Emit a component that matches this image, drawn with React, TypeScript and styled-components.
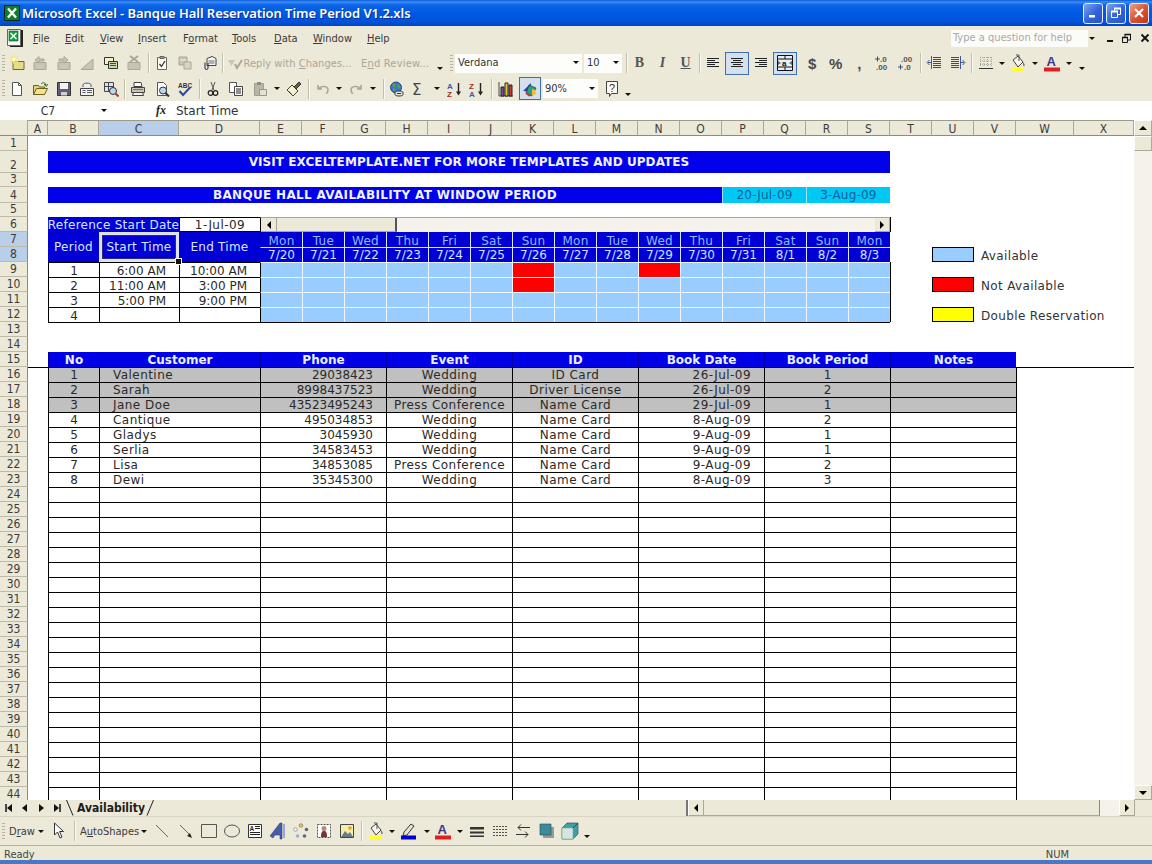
import React from "react";
import styled, { createGlobalStyle, css } from "styled-components";

const UI = `"DejaVu Sans Condensed","Noto Sans",sans-serif`;
const SHEET = `"DejaVu Sans","Noto Sans",sans-serif`;
const BAR = "#ece9d8";

const Global = createGlobalStyle`
  html, body { margin: 0; padding: 0; width: 1152px; height: 864px; overflow: hidden; background: ${BAR}; }
  * { box-sizing: border-box; }
  svg { display: block; flex: none; }
`;

const Win = styled.div`display:flex;flex-direction:column;width:1152px;height:864px;background:${BAR};font-family:${UI};color:#222;`;

/* ---- title bar ---- */
const TitleBar = styled.div`
  height:26px;flex:none;display:flex;align-items:center;padding:0 3px 0 4px;color:#fff;
  background:linear-gradient(#0a5ad8 0,#3d8df5 2px,#0a63e6 5px,#0058e0 14px,#0052dc 22px,#0043c0 26px);
`;
const TitleText = styled.span`margin-left:2px;font:600 13px/26px "Noto Sans",sans-serif;letter-spacing:-.06px;text-shadow:1px 1px 0 #0a2f8a;flex:1;white-space:nowrap;`;
const WinBtn = styled.div<{ $close?: boolean }>`
  width:20px;height:21px;margin-left:3px;border:1px solid #e8effa;border-radius:3px;display:flex;align-items:center;justify-content:center;
  background:${p => p.$close ? "linear-gradient(135deg,#f0a080,#d8502c 55%,#c03818)" : "linear-gradient(135deg,#7ea4ee,#2f62d8 55%,#2a55c8)"};
`;

/* ---- toolbars ---- */
const MenuRow = styled.div`height:24px;flex:none;display:flex;align-items:center;`;
const MenuItem = styled.span<{ $w: number }>`flex:none;width:${p => p.$w}px;font-size:11px;color:#3a3a3a;white-space:nowrap;`;
const HelpBox = styled.div`width:137px;height:17px;background:#fbfbf8;color:#a9a9a9;font-size:11px;line-height:16px;padding-left:2px;white-space:nowrap;`;
const Tool = styled.div<{ $h: number; $pad?: number }>`height:${p => p.$h}px;flex:none;display:flex;align-items:center;padding-left:${p => p.$pad ?? 2}px;`;
const Grip = styled.i`flex:none;width:3px;height:17px;background:repeating-linear-gradient(#b5b29f 0 1px,transparent 1px 3px);`;
const Slot = styled.div<{ $w: number; $on?: boolean }>`
  flex:none;width:${p => p.$w}px;height:23px;display:flex;align-items:center;justify-content:center;
  ${p => p.$on && css`background:#d5e0ee;outline:1px solid #3f6ea8;outline-offset:-1px;`}
`;
const Sep = styled.div<{ $w: number }>`
  flex:none;width:${p => p.$w}px;height:20px;display:flex;justify-content:center;
  &::before{content:"";width:1px;height:100%;background:#c2bfac;box-shadow:1px 0 0 #fafaf4;}
`;
const Gap = styled.div<{ $w: number }>`flex:none;width:${p => p.$w}px;`;
const Caret = styled.i`display:block;width:0;height:0;border-left:3px solid transparent;border-right:3px solid transparent;border-top:3px solid #111;`;
const Chevron = styled(Caret)`margin-top:11px;`;
const DimLabel = styled.div<{ $w: number; $pad: number }>`flex:none;width:${p => p.$w}px;padding:1px 0 0 ${p => p.$pad}px;font-size:11px;color:#aaa797;white-space:nowrap;overflow:hidden;display:flex;align-items:center;`;
const ReplyText = styled.span`margin-left:1px;letter-spacing:.05px;white-space:pre;`;
const EndText = styled.span`letter-spacing:.2px;white-space:pre;`;
const Label = styled(DimLabel)`color:#3a3a3a;`;
const Combo = styled.div<{ $w: number; $pad?: number }>`
  flex:none;width:${p => p.$w}px;height:19px;background:#fdfdfb;display:flex;align-items:center;justify-content:space-between;
  padding:0 3px 1px ${p => p.$pad ?? 3}px;font-size:11px;color:#333;
`;
const GlyphB = styled.span<{ $i?: boolean; $u?: boolean }>`
  font:${p => p.$i ? "italic " : ""}700 14px "Liberation Serif",serif;color:#555;
  ${p => p.$u && "text-decoration:underline;"}
`;
const GlyphN = styled.span`font:700 15px "Liberation Sans",sans-serif;color:#4a4a4a;`;

/* ---- formula bar ---- */
const Formula = styled.div`height:19px;flex:none;display:flex;align-items:center;background:#fff;font-family:${SHEET};`;
const NameBox = styled.div`flex:none;width:96px;text-align:center;font:12px ${UI};color:#333;`;
const FxArea = styled.div`flex:none;width:80px;height:100%;display:flex;align-items:center;padding-left:5px;background:#fff;`;
const Fx = styled.span`margin-left:49px;font:italic 700 12px "Liberation Serif",serif;color:#222;`;
const FormulaText = styled.span`font-size:12px;color:#333;`;

/* ---- sheet ---- */
const SheetArea = styled.div`height:680px;flex:none;display:flex;background:#fff;position:relative;overflow:hidden;`;
const Grid = styled.div`
  flex:none;width:1134px;height:680px;overflow:hidden;display:grid;position:relative;font:12px/1 ${SHEET};color:#2a2a2a;
  grid-template-columns:28px 20px 51px 80px 81px repeat(18,42px) 58px 60px;
  grid-template-rows:16px 15px 22px 14px 16px 14px repeat(39,15px);
`;
type At = { $c: number; $r: number; $cs?: number; $rs?: number };
const place = css<At>`
  grid-column:${p => p.$c} / span ${p => p.$cs ?? 1};
  grid-row:${p => p.$r + 1} / span ${p => p.$rs ?? 1};
  display:flex;align-items:center;white-space:nowrap;
`;
const Corner = styled.div`grid-column:1;grid-row:1;background:${BAR};border-right:1px solid #aca899;border-bottom:1px solid #8d8b7c;`;
const ColHead = styled.div<{ $c: number; $on: boolean }>`
  grid-column:${p => p.$c};grid-row:1;display:flex;align-items:center;justify-content:center;padding-top:1px;
  background:${p => p.$on ? "#b9cee8" : BAR};border-right:1px solid #aca899;border-bottom:1px solid #8d8b7c;border-top:1px solid #9c9a8a;
  font:12px ${UI};color:#3c3c3c;
`;
const RowHead = styled.div<{ $r: number; $on: boolean }>`
  grid-column:1;grid-row:${p => p.$r + 1};display:flex;align-items:flex-end;justify-content:center;
  background:${p => p.$on ? "#b9cee8" : BAR};border-right:1px solid #8d8b7c;border-bottom:1px solid #bdbaa8;
  font:12px/14px ${UI};color:#3c3c3c;
`;
const Banner = styled.div<At & { $sp: number }>`${place};justify-content:center;background:#0000ea;color:#f2f2ff;font-weight:700;font-size:12px;letter-spacing:${p => p.$sp}px;`;
const DateChip = styled.div<At>`${place};justify-content:center;background:#00c8f4;color:#10609a;border-left:1px solid #9fe6f8;letter-spacing:.2px;`;
const PeriodHead = styled.div<At>`${place};justify-content:center;background:#0000d4;color:#d8e6ff;letter-spacing:.25px;`;
const RefLabel = styled(PeriodHead)`padding-top:1px;letter-spacing:.27px;`;
const RefDate = styled.div<At>`${place};justify-content:center;background:#fff;border:1px solid #000;border-right:0;padding-top:1px;letter-spacing:.45px;`;
const Selected = styled(PeriodHead)`position:relative;border:3px solid #dfe2e8;box-shadow:inset 0 0 0 1px #2a2a80;`;
const Handle = styled.i`position:absolute;right:-6px;bottom:-6px;width:7px;height:7px;background:#111;border:1px solid #fff;`;
const DayHead = styled.div<At & { $date?: boolean; $first?: boolean }>`
  ${place};justify-content:center;background:#0000d4;color:${p => p.$date ? "#cfe2ff" : "#8fb8ff"};
  border-left:1px solid ${p => p.$first ? "#0000d4" : "#dfe6ff"};
  ${p => p.$date ? "border-top:1px solid #dfe6ff;" : "padding-top:2px;letter-spacing:.3px;"}
`;
const Avail = styled.div<At & { $red?: boolean; $last?: boolean; $bottom?: boolean; $first?: boolean }>`
  ${place};background:${p => p.$red ? "#ff0000" : "#99ccff"};
  border-left:1px solid ${p => p.$first ? "#000" : "#eef6ff"};
  border-top:1px solid #eef6ff;
  box-shadow:${p => p.$last ? "1px 0 0 #000" : "0 0 0 transparent"}${p => p.$bottom ? ",0 1px 0 #000" : ""};
`;
const DataCell = styled.div<At & { $align?: string; $grey?: boolean; $last?: boolean; $bottom?: boolean; $num?: boolean; $low?: boolean }>`
  ${place};justify-content:${p => p.$align ?? "center"};
  ${p => p.$align === "flex-end" ? "padding-right:13px;" : p.$align === "flex-start" ? "padding-left:13px;" : ""}
  ${p => p.$low && "padding-top:2px;"}
  letter-spacing:${p => p.$num ? 0 : .45}px;
  background:${p => p.$grey ? "#c0c0c0" : "#fff"};border-top:1px solid #000;border-left:1px solid #000;
  ${p => p.$last && "box-shadow:1px 0 0 #000;"}
  ${p => p.$bottom && "box-shadow:0 1px 0 #000;"}
`;
const TableHead = styled.div<At>`${place};justify-content:center;background:#0000e6;color:#e8f0ff;font-weight:700;font-size:12px;border-left:1px solid #0000aa;`;
const Swatch = styled.div<At & { $bg: string }>`${place};background:${p => p.$bg};border:1px solid #000;`;
const LegendText = styled.div<At>`${place};padding:2px 0 0 7px;color:#333;letter-spacing:.35px;`;
const FreezeLine = styled.div`position:absolute;left:28px;right:-18px;top:247px;height:1px;background:#000;`;

const HScroll = styled.div<At>`${place};align-items:stretch;background:#f4f2ea;border-top:1px solid #a8a698;border-left:1px solid #000;box-shadow:1px 0 0 #000;`;
const ScrollBtn = styled.div<{ $w?: number }>`
  flex:none;width:${p => p.$w ?? 16}px;display:flex;align-items:center;justify-content:center;background:${BAR};
  border-right:1px solid #a8a698;border-bottom:1px solid #a8a698;
`;
const ScrollThumb = styled.div<{ $w: number }>`
  flex:none;width:${p => p.$w}px;background:${BAR};border-right:2px solid #555;border-bottom:1px solid #a8a698;
`;
const ScrollFill = styled.div`flex:1;`;
const VScroll = styled.div`flex:none;width:18px;height:680px;display:flex;flex-direction:column;background:#f4f2ea;`;
const VBtn = styled.div<{ $h: number }>`flex:none;height:${p => p.$h}px;display:flex;align-items:center;justify-content:center;background:${BAR};border:1px solid #aca899;border-top-color:#fff;border-left-color:#fff;`;
const VFill = styled.div`flex:1;`;
const Up = styled.i`width:0;height:0;border-left:4px solid transparent;border-right:4px solid transparent;border-bottom:4px solid #000;`;
const Down = styled.i`width:0;height:0;border-left:4px solid transparent;border-right:4px solid transparent;border-top:4px solid #000;`;
const Lft = styled.i`width:0;height:0;border-top:4px solid transparent;border-bottom:4px solid transparent;border-right:4px solid #000;`;
const Rgt = styled.i`width:0;height:0;border-top:4px solid transparent;border-bottom:4px solid transparent;border-left:4px solid #000;`;

/* ---- tab bar ---- */
const TabBar = styled.div`height:17px;flex:none;display:flex;align-items:stretch;background:${BAR};border-bottom:1px solid #d8d5c4;`;
const TabNav = styled.div`flex:none;width:66px;display:flex;align-items:center;padding-left:4px;gap:7px;`;
const NavBtn = styled.div`flex:none;width:9px;display:flex;align-items:center;justify-content:center;`;
const Tab = styled.div`flex:none;width:620px;display:flex;align-items:flex-start;`;
const TabName = styled.span`font:700 12px/17px ${UI};color:#1c1c1c;margin:0 1px 0 3px;`;
const Split = styled.div`flex:none;width:2px;background:#777;`;
const TabBtn = styled.div<{ $w: number }>`flex:none;width:${p => p.$w}px;display:flex;align-items:center;justify-content:center;background:${BAR};border:1px solid #aca899;border-top:0;border-left-color:#fff;`;
const TabThumb = styled.div`flex:none;width:396px;background:${BAR};border-right:1px solid #8d8b7c;border-bottom:1px solid #aca899;`;
const TabTrack = styled.div`flex:none;width:19px;background:#f4f2ea;`;
const TabCorner = styled.div`flex:1;background:${BAR};`;

/* ---- status ---- */
const Status = styled.div`height:15px;flex:none;display:flex;align-items:center;justify-content:space-between;padding:3px 83px 0 4px;font-size:11px;color:#444;border-top:1px solid #b4b19f;`;
const Strip = styled.div`height:4px;flex:none;background:#4a78c4;`;

/* ---- icons ---- */
const S = ({ children, w = 16, h = 16 }: { children: React.ReactNode; w?: number; h?: number }) => (
  <svg width={w} height={h} viewBox={`0 0 ${w} ${h}`}>{children}</svg>
);
const grey = "#c8c5b3", gs = "#aaa796";
const NoteG = () => <path d="M2 7.5h12v7H2z" fill={grey} stroke={gs} />;
const Lines = ({ d }: { d: string }) => <path d={d} stroke="#222" fill="none" />;
const doc = "M3.5 1.5h6l3 3v10h-9z";
const icons: Record<string, React.ReactNode> = {
  cnew: <S><path d="M4 6.5h11v8H4z" fill="#e6dc86" stroke="#6f6a34" /><path d="M5 0l1 3 3-1-2 2.5 2 2.5-3-1-1 3-1-3-3 1 2-2.5-2-2.5 3 1z" fill="#fffba8" stroke="#e8e060" strokeWidth=".6" /></S>,
  cprev: <S><NoteG /><path d="M3 4h5V1.5l4 3.5-4 3V6H3z" fill={grey} stroke={gs} transform="matrix(-1 0 0 1 15 0)" /></S>,
  cnext: <S><NoteG /><path d="M3 4h5V1.5l4 3.5-4 3V6H3z" fill={grey} stroke={gs} /></S>,
  cshow: <S><path d="M2 14.5L14 4v10.500z" fill={grey} stroke={gs} /></S>,
  call: <S><path d="M1.5 2.5h9v7h-9z" fill="#f4f2c8" stroke="#333" /><path d="M5.5 6.5h9v7h-9z" fill="#c9d8a8" stroke="#333" /><path d="M7 8.5h6M7 10.5h6" stroke="#445" /></S>,
  cdel: <S><NoteG /><path d="M4 1l8 6M12 1L4 7" stroke={gs} strokeWidth="2" /></S>,
  task: <S><path d="M3.5 2.5h9v12h-9z" fill="#fbfaf2" stroke="#666" /><path d="M6 1.5h4v2H6z" fill="#999" stroke="#666" /><path d="M5.5 9l2 2.5L11 6" stroke="#333" fill="none" strokeWidth="1.3" /></S>,
  track: <S><path d="M2 2h8v8H2z" fill={grey} stroke={gs} /><path d="M7 7h7v7H7z" fill="#d8d5c4" stroke={gs} /><path d="M3 5h6" stroke="#eee" /></S>,
  mail: <S><path d="M6 3.5l5-2 4 2v7H6z" fill="#fafaf2" stroke="#444" /><path d="M7.5 6h6M7.5 8h6" stroke="#667" /><path d="M4 7.5v5.5a1.5 1.5 0 0 0 3 0V8" fill="none" stroke="#224" /></S>,
  reply: <S><path d="M1 4h7l-3.500 6z" fill={grey} /><path d="M8 8l2 4 5-8" stroke={gs} strokeWidth="2" fill="none" /></S>,
  new: <S><path d={doc} fill="#fff" stroke="#555" /><path d="M9.5 1.5v3h3" fill="none" stroke="#555" /></S>,
  open: <S><path d="M1.5 4.5h5l1 1.5h5v7.5h-11z" fill="#e6d27c" stroke="#6f5f1c" /><path d="M1.5 13.5l3-6h11l-3 6z" fill="#f4e48c" stroke="#6f5f1c" /><path d="M9 3c2-2 4-1.5 5 .5l-2 0 2.5 2 1-2.5" fill="none" stroke="#3c6a3c" /></S>,
  save: <S><path d="M1.5 1.5h13v13h-13z" fill="#5f5f7a" stroke="#333" /><path d="M4 2h8v6H4z" fill="#f4f4f4" /><path d="M5 11h6v3.500H5z" fill="#cfcfcf" /></S>,
  perm: <S><path d="M4 6V4c0-2.500 8-2.500 8 0v2" fill="#eee" stroke="#555" /><path d="M1.5 7.5h13v7h-13z" fill="#f4f2e2" stroke="#444" /><path d="M3.5 9.5h3M3.5 11.5h3M8 9.5h5M8 11.5h5" stroke="#55617a" /></S>,
  search: <S><path d="M1.5 1.5h9v9h-9z" fill="#dfe4ea" stroke="#444" /><path d="M1.5 5.5h9M5.5 1.5v9" stroke="#445" /><circle cx="10" cy="10" r="3.5" fill="#bcd8f0" stroke="#333" /><path d="M12.5 12.5l3 3" stroke="#c03020" strokeWidth="2" /></S>,
  print: <S><path d="M4 1.5h7l1 4H4z" fill="#fff" stroke="#444" /><path d="M1.5 6.5h13v5h-13z" fill="#c9c6b8" stroke="#444" /><path d="M3.5 11.5h9l1 3h-11z" fill="#f5f4ee" stroke="#444" /><path d="M3 8.5h10" stroke="#777" /></S>,
  preview: <S><path d={doc} fill="#fff" stroke="#555" /><circle cx="9" cy="9.5" r="3.5" fill="#bcd8f0" stroke="#333" /><path d="M11.5 12l3.500 3.500" stroke="#333" strokeWidth="2" /></S>,
  spell: <S><text x="1" y="7" fontFamily="Liberation Sans" fontSize="6.5" fontWeight="700" fill="#333">ABC</text><path d="M2.5 10l3.500 4 7-7.500" stroke="#2c4a9a" strokeWidth="2" fill="none" /></S>,
  cut: <S><path d="M6 1l3 8M10 1L7 9" stroke="#555" /><circle cx="5.5" cy="12" r="2.3" fill="none" stroke="#222" strokeWidth="1.2" /><circle cx="10.5" cy="12" r="2.3" fill="none" stroke="#222" strokeWidth="1.2" /></S>,
  copy: <S><path d="M1.5 1.5h7v10h-7z" fill="#fff" stroke="#555" /><path d="M6.5 5.5h8v9h-8z" fill="#fff" stroke="#444" /><Lines d="M8 8h5M8 10h5M8 12h5" /></S>,
  paste: <S><path d="M2.5 2.5h9v12h-9z" fill="#b8b6a6" stroke="#a09e8e" /><path d="M5 1h4v3H5z" fill="#8f8d80" /><path d="M7.5 8.5h7v6h-7z" fill="#e4e2d4" stroke="#999786" /></S>,
  brush: <S><path d="M1 9l5-5 6 6-5 5z" fill="#f6f2cc" stroke="#444" /><path d="M8 6l5-5 2 2-5 5z" fill="#7f5c28" stroke="#333" /><path d="M3 10l3 3" stroke="#aaa" /></S>,
  undo: <S><path d="M3 4v4h4M3.5 8C6 4 13 5 13 9c0 2-1 3-2 3.500" fill="none" stroke={gs} strokeWidth="1.6" /></S>,
  redo: <S><path d="M13 4v4H9M12.5 8C10 4 3 5 3 9c0 2 1 3 2 3.500" fill="none" stroke={gs} strokeWidth="1.6" /></S>,
  globe: <S><circle cx="7" cy="6.5" r="5.5" fill="#3c78c8" stroke="#224a88" /><path d="M3 3c3-1 4 1 3 3S3 7 4 9l3 1M9 3l3 3-3 1z" fill="#5aa24a" /><path d="M6 11.5c0-2 8-2 8 0v2c0 2-8 2-8 0z" fill="#e8e6d8" stroke="#333" /><path d="M8 12.5h4" stroke="#333" /></S>,
  az: <S><text x="0" y="7.5" fontFamily="Liberation Sans" fontSize="8" fontWeight="700" fill="#3c5ab0">A</text><text x="0" y="15.5" fontFamily="Liberation Sans" fontSize="8" fontWeight="700" fill="#a03020">Z</text><path d="M11.5 2v10" stroke="#222" strokeWidth="1.4" /><path d="M9 10.5h5l-2.500 4z" fill="#222" /></S>,
  za: <S><text x="0" y="7.5" fontFamily="Liberation Sans" fontSize="8" fontWeight="700" fill="#a03020">Z</text><text x="0" y="15.5" fontFamily="Liberation Sans" fontSize="8" fontWeight="700" fill="#3c5ab0">A</text><path d="M11.5 2v10" stroke="#222" strokeWidth="1.4" /><path d="M9 10.5h5l-2.500 4z" fill="#222" /></S>,
  chart: <S><path d="M1 1v14h14" fill="none" stroke="#444" /><path d="M3 6h3v9H3z" fill="#7a4a9c" stroke="#222" /><path d="M7 2h3v13H7z" fill="#e8c83c" stroke="#222" /><path d="M11 4h3v11h-3z" fill="#c83c3c" stroke="#222" /></S>,
  draw: <S><path d="M1 10L9 2v9z" fill="#2a4ab0" /><path d="M7 4l7 3-4 8-6-3z" fill="#2aa080" stroke="#123" strokeWidth=".6" /><path d="M10 8l3 1 1 4-4 2z" fill="#f0c030" /><path d="M4 12l4 3" stroke="#d03030" strokeWidth="2" /></S>,
  help: <S w={16} h={18}><path d="M2.5 1.5h11v12h-6l-2 3v-3h-3z" fill="#fbfbf4" stroke="#444" /><text x="5" y="11.5" fontFamily="Liberation Sans" fontSize="11" fill="#333">?</text></S>,
  aleft: <S><Lines d="M2 3.5h12M2 5.5h8M2 7.5h12M2 9.5h8M2 11.5h12" /></S>,
  acenter: <S><Lines d="M2 3.5h12M4 5.5h8M2 7.5h12M4 9.5h8M2 11.5h12" /></S>,
  aright: <S><Lines d="M2 3.5h12M6 5.5h8M2 7.5h12M6 9.5h8M2 11.5h12" /></S>,
  merge: <S w={18} h={18}><path d="M1.5 1.5h15v15h-15z" fill="#e8eef6" stroke="#111" /><path d="M1.5 5h15M1.5 13h15M9 1.5V5M9 13v3.500" stroke="#111" /><path d="M2 7v4M2.5 9h2M16 7v4M15.5 9h-2" stroke="#111" /><text x="6" y="12" fontFamily="Liberation Sans" fontSize="8" fontWeight="700" fill="#111">a</text></S>,
  incd: <S w={20}><text x="7" y="7" fontFamily="Liberation Sans" fontSize="8" fontWeight="700" fill="#555">.0</text><text x="3" y="15" fontFamily="Liberation Sans" fontSize="8" fontWeight="700" fill="#555">.00</text><path d="M2 4h5M4.5 1.500v5" stroke="#35507a" /></S>,
  decd: <S w={20}><text x="5" y="7" fontFamily="Liberation Sans" fontSize="8" fontWeight="700" fill="#555">.00</text><text x="8" y="15" fontFamily="Liberation Sans" fontSize="8" fontWeight="700" fill="#555">.0</text><path d="M2 12h5M4.500 9.500v5" stroke="#35507a" /></S>,
  outd: <S><path d="M7 2.5h8M7 4.5h8M7 6.5h8M7 8.5h8M7 10.5h8M7 12.5h8" stroke="#4a4a4a" /><path d="M5 7.5H2M3.5 5l-2.500 2.500L3.500 10M5.500 1v13" stroke="#3c5a9a" fill="none" /></S>,
  ind: <S><path d="M1 2.5h8M1 4.5h8M1 6.5h8M1 8.5h8M1 10.5h8M1 12.5h8" stroke="#4a4a4a" /><path d="M11 7.5h3M12.5 5l2.500 2.500L12.500 10M10.500 1v13" stroke="#3c5a9a" fill="none" /></S>,
  border: <S><path d="M2 2.5h12M2 6h12M2 9.5h12M2.5 2v10M6 2v10M9.5 2v10M13.5 2v10" stroke="#a5a5a0" strokeDasharray="1 1" /><path d="M1 13.5h14" stroke="#333" /></S>,
  fill: <S w={18} h={18}><path d="M4 6l5-4 5 6-5 5z" fill="#f5f4ee" stroke="#444" /><path d="M7 1h3v6" fill="none" stroke="#555" /><path d="M14 8c2 2 2 4 1 4.500-1-.5-1-2.500-1-4.500z" fill="#667" /><path d="M3 14h12v4H3z" fill="#ffff30" /></S>,
  fcolor: <S w={18} h={18}><text x="3.5" y="12" fontFamily="Liberation Sans" fontSize="13" fontWeight="700" fill="#3a3a86">A</text><path d="M1 13.5h16v4H1z" fill="#e02020" /></S>,
  lcolor: <S w={18} h={18}><path d="M4 10l7-8 3 2-7 9-4 1z" fill="#e8e4c8" stroke="#334" /><path d="M1 13.5h15v4H1z" fill="#0000d0" /></S>,
  cursor: <S w={14} h={18}><path d="M2.5 1v12l3-3 2.500 6 2-1-2.500-5.500h4z" fill="#fff" stroke="#333" /></S>,
  dline: <S><path d="M2 2l12 12" stroke="#666" /></S>,
  darrow: <S><path d="M2 2l10 10" stroke="#666" /><path d="M9 13l5 2-2-5z" fill="#222" /></S>,
  rect: <S w={18}><path d="M1.5 1.5h15v13h-15z" fill="none" stroke="#555" /></S>,
  oval: <S w={18}><ellipse cx="9" cy="8" rx="7.5" ry="6" fill="none" stroke="#555" /></S>,
  tbox: <S><path d="M1.5 1.5h13v13h-13z" fill="#fff" stroke="#333" /><text x="2.5" y="7.5" fontFamily="Liberation Sans" fontSize="6.5" fontWeight="700" fill="#222">A</text><Lines d="M8 3.5h5M8 5.5h5M3 9.5h10M3 11.5h10" /></S>,
  wart: <S w={18} h={18}><path d="M1 14L11 1h2v16l-2 0V13L6 13 4 16z" fill="#4a5ca8" stroke="#2a3470" strokeWidth=".5" /><path d="M14 2h2v14h-2z" fill="#99a8d8" /></S>,
  diag: <S><g fill="#667"><circle cx="8" cy="2.5" r="1.8" fill="#e8c84a" stroke="#555" strokeWidth=".5" /><circle cx="13.5" cy="6.5" r="1.8" /><circle cx="11.5" cy="13" r="1.8" /><circle cx="4.5" cy="13" r="1.8" fill="#9ab0d8" /><circle cx="2.5" cy="6.5" r="1.8" fill="#fff" stroke="#555" strokeWidth=".5" /></g></S>,
  clip: <S><path d="M1.5 1.5h13v13h-13z" fill="#fff" stroke="#555" strokeDasharray="2 1" /><circle cx="8" cy="5.5" r="2.5" fill="#b88a78" /><path d="M5 14c0-5 1-6 3-6s3 1 3 6z" fill="#703838" /></S>,
  pic: <S><path d="M1.5 1.5h13v13h-13z" fill="#f6eea8" stroke="#444" /><circle cx="11" cy="5" r="1.8" fill="#e8a020" /><path d="M2 14l4-6 3 3 2-2 3 5z" fill="#667c8c" /></S>,
  lstyle: <S><path d="M1 4h14v2.500H1zM1 8.500h14v2H1zM1 12.500h14v1.500H1z" fill="#333" /></S>,
  dash: <S><path d="M1 3.5h14M1 6.5h14M1 9.5h14M1 12.5h14" stroke="#555" strokeDasharray="2 1" /></S>,
  arrows: <S><path d="M3 4.5h12M3 4.5l3-3M3 4.5l3 3M1 11.5h12M13 11.5l-3-3M13 11.5l-3 3" stroke="#333" fill="none" /></S>,
  shadow: <S><path d="M4 4h11v11H4z" fill="#999" /><path d="M1 1h11v11H1z" fill="#3c8c98" stroke="#246" strokeWidth=".6" /></S>,
  three: <S w={18} h={18}><path d="M1 6l5-5h11v11l-5 5H1z" fill="#3ca0a8" stroke="#246" strokeWidth=".6" /><path d="M1 6h11v11H1z" fill="#d8e4e4" stroke="#7a8" strokeWidth=".6" /><path d="M12 6l5-5" stroke="#246" /></S>,
  minW: <S w={12} h={12}><path d="M2 8h6v2.500H2z" fill="#fff" /></S>,
  maxW: <S w={12} h={12}><path d="M1.5 4.5h6v6h-6zM4.500 4.500v-3h6v6h-3" fill="none" stroke="#fff" /><path d="M1 4.5h7M4 1.5h7" stroke="#fff" strokeWidth="2" /></S>,
  closeW: <S w={12} h={12}><path d="M2 2l8 8M10 2l-8 8" stroke="#fff" strokeWidth="2.2" /></S>,
  mMin: <S w={10} h={10}><path d="M1 7h6v2H1z" fill="#111" /></S>,
  mMax: <S w={11} h={11}><path d="M1.5 4.5h5v5h-5zM4 4V1.500h5.500V7H7" fill="none" stroke="#111" /><path d="M1 4.5h6M3.500 1.500h6.500" stroke="#111" strokeWidth="1.6" /></S>,
  mClose: <S w={10} h={10}><path d="M1.5 1.5l7 7M8.500 1.500l-7 7" stroke="#111" strokeWidth="1.8" /></S>,
  xlApp: <S><path d="M.5.5h15v15H.5z" fill="#137a34" stroke="#06260f" /><path d="M4 3.5l8 9M12 3.500l-8 9" stroke="#f0fff0" strokeWidth="2.400" /></S>,
  xlDoc: <S w={20} h={20}><path d="M6 2h13v17H6z" fill="#222" /><path d="M3.5 1.5h13v16h-13z" fill="#f8f8f4" stroke="#666" /><path d="M5 3h9v10H5z" fill="#1c9a48" stroke="#0c5a28" strokeWidth=".6" /><path d="M6.5 5l6 6M12.500 5l-6 6" stroke="#e8fff0" strokeWidth="1.500" /></S>,
  first: <S w={8} h={8}><path d="M1 0v8" stroke="#111" strokeWidth="1.5" /><path d="M7 0v8L2 4z" fill="#111" /></S>,
  prev: <S w={8} h={8}><path d="M6 0v8L1 4z" fill="#111" /></S>,
  next: <S w={8} h={8}><path d="M2 0v8l5-4z" fill="#111" /></S>,
  last: <S w={8} h={8}><path d="M7 0v8" stroke="#111" strokeWidth="1.5" /><path d="M1 0v8l5-4z" fill="#111" /></S>,
  slashL: <S w={8} h={16}><path d="M.5 0L7 15.500" stroke="#222" /></S>,
  slashR: <S w={8} h={16}><path d="M7.5 0L1 15.500" stroke="#222" /></S>,
  sigma: <S><text x="1" y="14" fontFamily="DejaVu Sans" fontSize="15" fill="#444">Σ</text></S>,
};

type Item = [string, number, boolean?];
const T1A: Item[] = [["cnew", 23.5], ["cprev", 23.5], ["cnext", 23.5], ["cshow", 23.5], ["call", 23.5], ["cdel", 23.5]];
const T1B: Item[] = [["task", 23.5], ["track", 23.5], ["mail", 23.5]];
const T2A: Item[] = [["new", 23.5], ["open", 23.5], ["save", 23.5], ["perm", 23.5], ["search", 23.5]];
const T2B: Item[] = [["print", 23.5], ["preview", 23.5], ["spell", 23.5]];
const D2: Item[] = [["dline", 24], ["darrow", 23], ["rect", 23], ["oval", 23], ["tbox", 23], ["wart", 23], ["diag", 23], ["clip", 23], ["pic", 23]];
const D3: Item[] = [["lstyle", 25], ["dash", 22], ["arrows", 24], ["shadow", 23], ["three", 23]];

const Slots = ({ items }: { items: Item[] }) => <>{items.map(([n, w, on]) => <Slot key={n} $w={w} $on={on}>{icons[n]}</Slot>)}</>;
const Dd = ({ w }: { w: number }) => <Slot $w={w}><Caret /></Slot>;
const More = ({ w }: { w: number }) => <Slot $w={w}><Chevron /></Slot>;

const letters = "A B C D E F G H I J K L M N O P Q R S T U V W X".split(" ");
const days = ["Mon", "Tue", "Wed", "Thu", "Fri", "Sat", "Sun", "Mon", "Tue", "Wed", "Thu", "Fri", "Sat", "Sun", "Mon"];
const dates = ["7/20", "7/21", "7/22", "7/23", "7/24", "7/25", "7/26", "7/27", "7/28", "7/29", "7/30", "7/31", "8/1", "8/2", "8/3"];
const periods = [["1", "6:00 AM", "10:00 AM"], ["2", "11:00 AM", "3:00 PM"], ["3", "5:00 PM", "9:00 PM"], ["4", "", ""]];
const heads: [string, number, number][] = [["No", 3, 1], ["Customer", 4, 2], ["Phone", 6, 3], ["Event", 9, 3], ["ID", 12, 3], ["Book Date", 15, 3], ["Book Period", 18, 3], ["Notes", 21, 3]];
const people = [
  ["1", "Valentine", "29038423", "Wedding", "ID Card", "26-Jul-09", "1"],
  ["2", "Sarah", "8998437523", "Wedding", "Driver License", "26-Jul-09", "2"],
  ["3", "Jane Doe", "43523495243", "Press Conference", "Name Card", "29-Jul-09", "1"],
  ["4", "Cantique", "495034853", "Wedding", "Name Card", "8-Aug-09", "2"],
  ["5", "Gladys", "3045930", "Wedding", "Name Card", "9-Aug-09", "1"],
  ["6", "Serlia", "34583453", "Wedding", "Name Card", "9-Aug-09", "1"],
  ["7", "Lisa", "34853085", "Press Conference", "Name Card", "9-Aug-09", "2"],
  ["8", "Dewi", "35345300", "Wedding", "Name Card", "8-Aug-09", "3"],
];
const aligns: (string | undefined)[] = [undefined, "flex-start", "flex-end", undefined, undefined, "flex-end", undefined, undefined];
const rowNums = Array.from({ length: 44 }, (_, i) => i + 1);

const isRed = (c: number, r: number) => (c === 12 && (r === 9 || r === 10)) || (c === 15 && r === 9);

const Sheet = () => (
  <Grid>
    <Corner />
    {letters.map((l, i) => <ColHead key={l} $c={i + 2} $on={l === "C"}>{l}</ColHead>)}
    {rowNums.map(r => <RowHead key={r} $r={r} $on={r === 7 || r === 8}>{r}</RowHead>)}

    <Banner $c={3} $cs={18} $r={2} $sp={.07}>VISIT EXCELTEMPLATE.NET FOR MORE TEMPLATES AND UPDATES</Banner>
    <Banner $c={3} $cs={14} $r={4} $sp={.32}>BANQUE HALL AVAILABILITY AT WINDOW PERIOD</Banner>
    <DateChip $c={17} $cs={2} $r={4}>20-Jul-09</DateChip>
    <DateChip $c={19} $cs={2} $r={4}>3-Aug-09</DateChip>

    <RefLabel $c={3} $cs={2} $r={6}>Reference Start Date</RefLabel>
    <RefDate $c={5} $r={6}>1-Jul-09</RefDate>
    <HScroll $c={6} $cs={15} $r={6}>
      <ScrollBtn><Lft /></ScrollBtn>
      <ScrollThumb $w={120} />
      <ScrollFill />
      <ScrollBtn $w={15}><Rgt /></ScrollBtn>
    </HScroll>

    <PeriodHead $c={3} $r={7} $rs={2}>Period</PeriodHead>
    <Selected $c={4} $r={7} $rs={2}>Start Time<Handle /></Selected>
    <PeriodHead $c={5} $r={7} $rs={2}>End Time</PeriodHead>
    {days.map((d, i) => <DayHead key={i} $c={6 + i} $r={7} $first={i === 0}>{d}</DayHead>)}
    {dates.map((d, i) => <DayHead key={d} $c={6 + i} $r={8} $date $first={i === 0}>{d}</DayHead>)}

    {periods.map((p, i) => (
      <React.Fragment key={i}>
        <DataCell $c={3} $r={9 + i} $bottom={i === 3} $low $num>{p[0]}</DataCell>
        <DataCell $c={4} $r={9 + i} $align="flex-end" $bottom={i === 3} $low $num>{p[1]}</DataCell>
        <DataCell $c={5} $r={9 + i} $align="flex-end" $bottom={i === 3} $low $num>{p[2]}</DataCell>
        {days.map((_, j) => (
          <Avail key={j} $c={6 + j} $r={9 + i} $first={j === 0} $red={isRed(6 + j, 9 + i)} $last={j === 14} $bottom={i === 3} />
        ))}
      </React.Fragment>
    ))}

    <Swatch $c={22} $r={8} $bg="#99ccff" /><LegendText $c={23} $cs={3} $r={8}>Available</LegendText>
    <Swatch $c={22} $r={10} $bg="#ff0000" /><LegendText $c={23} $cs={3} $r={10}>Not Available</LegendText>
    <Swatch $c={22} $r={12} $bg="#ffff00" /><LegendText $c={23} $cs={3} $r={12}>Double Reservation</LegendText>

    {heads.map(([t, c, s]) => <TableHead key={t} $c={c} $cs={s} $r={15}>{t}</TableHead>)}
    {rowNums.filter(r => r >= 16).map(r => {
      const row = people[r - 16] ?? [];
      return heads.map(([t, c, s], k) => (
        <DataCell key={t} $c={c} $cs={s} $r={r} $align={aligns[k]} $grey={r <= 18} $last={k === 7} $num={k === 2 || k === 0 || k === 6}>{row[k] ?? ""}</DataCell>
      ));
    })}
    <FreezeLine />
  </Grid>
);

export default function App() {
  return (
    <Win>
      <Global />
      <TitleBar>
        {icons.xlApp}
        <TitleText>Microsoft Excel - Banque Hall Reservation Time Period V1.2.xls</TitleText>
        <WinBtn>{icons.minW}</WinBtn>
        <WinBtn>{icons.maxW}</WinBtn>
        <WinBtn $close>{icons.closeW}</WinBtn>
      </TitleBar>

      <MenuRow>
        <Gap $w={4} />{icons.xlDoc}<Gap $w={9} />
        <MenuItem $w={32}><u>F</u>ile</MenuItem>
        <MenuItem $w={35}><u>E</u>dit</MenuItem>
        <MenuItem $w={38}><u>V</u>iew</MenuItem>
        <MenuItem $w={45}><u>I</u>nsert</MenuItem>
        <MenuItem $w={49}>F<u>o</u>rmat</MenuItem>
        <MenuItem $w={42}><u>T</u>ools</MenuItem>
        <MenuItem $w={39}><u>D</u>ata</MenuItem>
        <MenuItem $w={54}><u>W</u>indow</MenuItem>
        <MenuItem $w={584}><u>H</u>elp</MenuItem>
        <HelpBox>Type a question for help</HelpBox>
        <Dd w={8} /><Gap $w={10} />{icons.mMin}<Gap $w={5} />{icons.mMax}<Gap $w={8} />{icons.mClose}
      </MenuRow>

      <Tool $h={26}>
        <Grip />
        <Slots items={T1A} /><Sep $w={4} /><Slots items={T1B} /><Sep $w={4} />
        <DimLabel $w={133.5} $pad={2}>{icons.reply}<ReplyText>Reply with <u>C</u>hanges...</ReplyText></DimLabel>
        <DimLabel $w={77} $pad={3}><EndText>E<u>n</u>d Review...</EndText></DimLabel>
        <More w={10} /><Gap $w={5} /><Grip /><Gap $w={2} />
        <Combo $w={127}>Verdana<Caret /></Combo><Gap $w={2} />
        <Combo $w={38}>10<Caret /></Combo><Gap $w={2} /><Sep $w={4} />
        <Slot $w={23}><GlyphB>B</GlyphB></Slot>
        <Slot $w={23}><GlyphB $i>I</GlyphB></Slot>
        <Slot $w={23}><GlyphB $u>U</GlyphB></Slot>
        <Sep $w={4} />
        <Slot $w={24}>{icons.aleft}</Slot>
        <Slot $w={24} $on>{icons.acenter}</Slot>
        <Slot $w={24}>{icons.aright}</Slot>
        <Slot $w={24} $on>{icons.merge}</Slot>
        <Gap $w={3.5} />
        <Slot $w={23.5}><GlyphN>$</GlyphN></Slot>
        <Slot $w={23.5}><GlyphN>%</GlyphN></Slot>
        <Slot $w={23.5}><GlyphN>,</GlyphN></Slot>
        <Slot $w={23.5}>{icons.incd}</Slot>
        <Slot $w={23.5}>{icons.decd}</Slot>
        <Sep $w={4} />
        <Slot $w={24}>{icons.outd}</Slot>
        <Slot $w={24}>{icons.ind}</Slot>
        <Sep $w={3} />
        <Slot $w={25}>{icons.border}</Slot><Dd w={8} />
        <Slot $w={24}>{icons.fill}</Slot><Dd w={9} />
        <Slot $w={25}>{icons.fcolor}</Slot><Dd w={9} />
        <Gap $w={4} /><More w={10} />
      </Tool>

      <Tool $h={25}>
        <Grip />
        <Slots items={T2A} /><Sep $w={4} /><Slots items={T2B} /><Sep $w={4} />
        <Slot $w={23.5}>{icons.cut}</Slot>
        <Slot $w={23.5}>{icons.copy}</Slot>
        <Slot $w={24}>{icons.paste}</Slot><Dd w={10} />
        <Slot $w={24}>{icons.brush}</Slot><Sep $w={4} />
        <Slot $w={25}>{icons.undo}</Slot><Dd w={8} />
        <Slot $w={26}>{icons.redo}</Slot><Dd w={8} />
        <Sep $w={12} />
        <Slot $w={16}>{icons.globe}</Slot>
        <Slot $w={28}>{icons.sigma}</Slot><Dd w={8} />
        <Slot $w={28}>{icons.az}</Slot>
        <Slot $w={16}>{icons.za}</Slot>
        <Sep $w={12} />
        <Slot $w={18}>{icons.chart}</Slot><Gap $w={4} />
        <Slot $w={22} $on>{icons.draw}</Slot><Gap $w={2} />
        <Combo $w={55} $pad={2}>90%<Caret /></Combo>
        <Gap $w={2} />
        <Slot $w={24}>{icons.help}</Slot>
        <More w={8} />
      </Tool>

      <Formula>
        <NameBox>C7</NameBox>
        <FxArea><Caret /><Fx>fx</Fx></FxArea>
        <FormulaText>Start Time</FormulaText>
      </Formula>

      <SheetArea>
        <Sheet />
        <VScroll>
          <VBtn $h={16}><Up /></VBtn>
          <VBtn $h={15} />
          <VFill />
          <VBtn $h={15}><Down /></VBtn>
        </VScroll>
      </SheetArea>

      <TabBar>
        <TabNav>
          <NavBtn>{icons.first}</NavBtn><NavBtn>{icons.prev}</NavBtn><NavBtn>{icons.next}</NavBtn><NavBtn>{icons.last}</NavBtn>
        </TabNav>
        <Tab>{icons.slashL}<TabName>Availability</TabName>{icons.slashR}</Tab>
        <Split />
        <TabBtn $w={16}><Lft /></TabBtn>
        <TabThumb />
        <TabTrack />
        <TabBtn $w={16}><Rgt /></TabBtn>
        <TabCorner />
      </TabBar>

      <Tool $h={28}>
        <Grip />
        <Label $w={32} $pad={4}><span>D<u>r</u>aw</span></Label>
        <Dd w={8} />
        <Slot $w={28}>{icons.cursor}</Slot>
        <Sep $w={2} />
        <Label $w={65} $pad={5}><span>A<u>u</u>toShapes</span></Label>
        <Dd w={8} /><Gap $w={2} />
        <Slots items={D2} />
        <Sep $w={6} />
        <Slot $w={24}>{icons.fill}</Slot><Dd w={7} />
        <Slot $w={28}>{icons.lcolor}</Slot><Dd w={7} />
        <Slot $w={26}>{icons.fcolor}</Slot><Dd w={8} />
        <Slots items={D3} />
        <More w={11} />
      </Tool>

      <Status><span>Ready</span><span>NUM</span></Status>
      <Strip />
    </Win>
  );
}
